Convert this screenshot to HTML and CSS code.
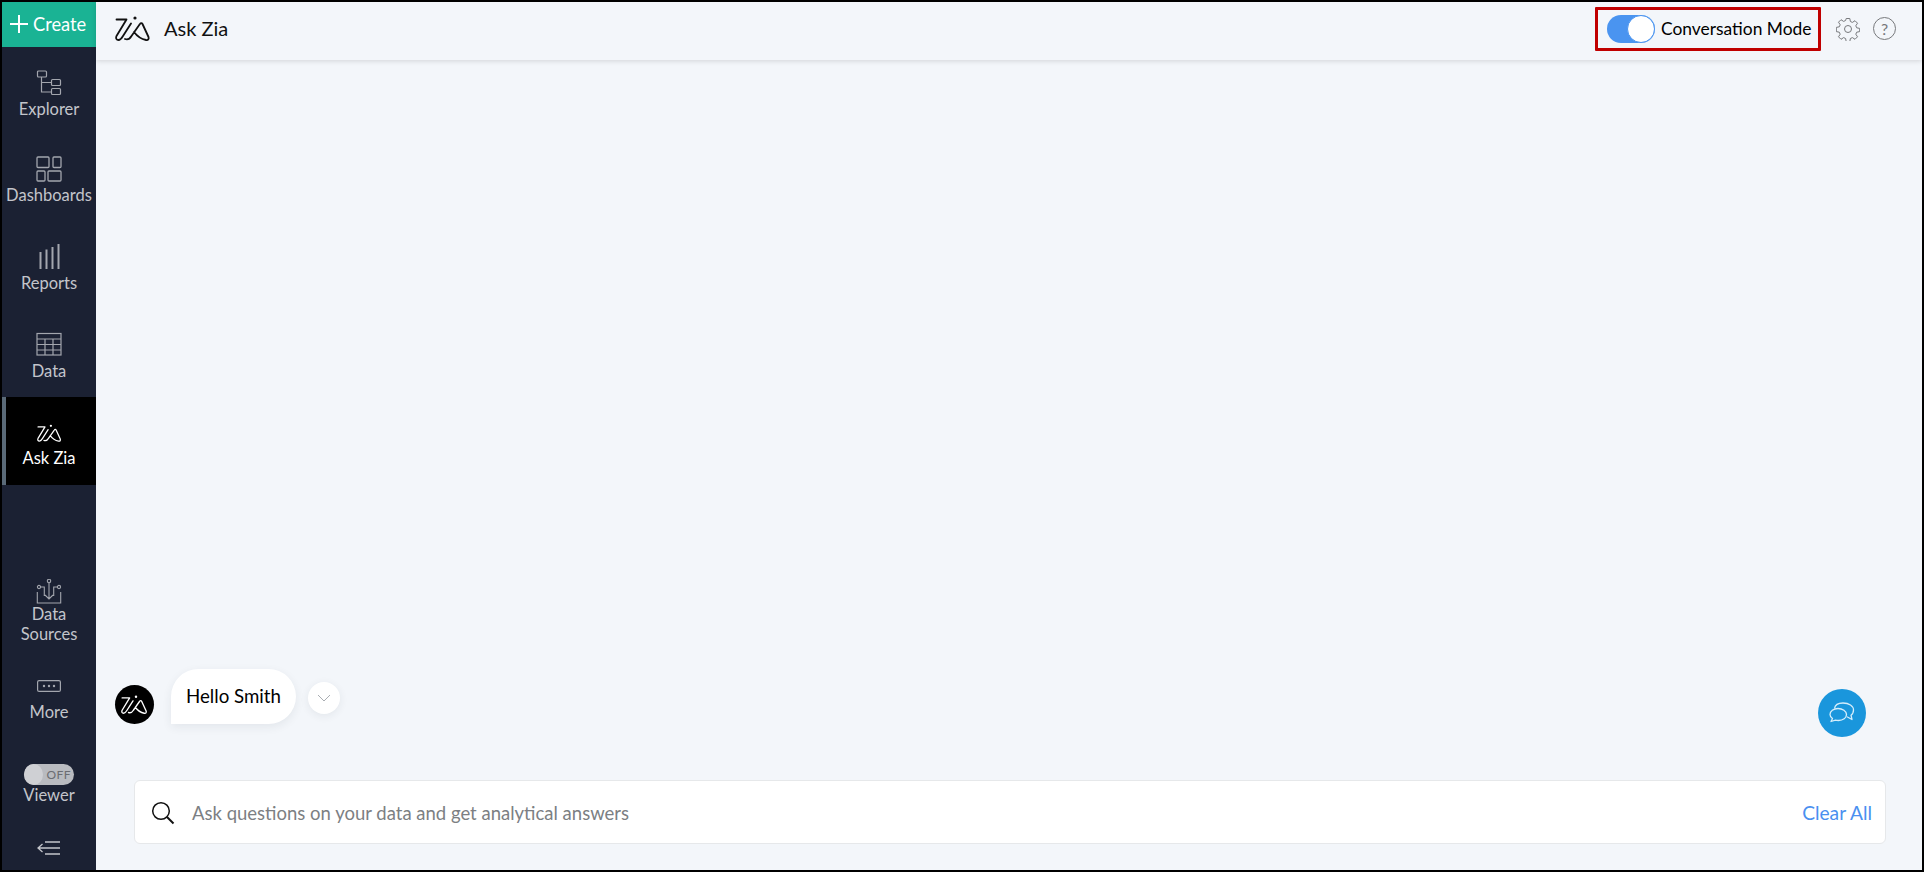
FILE: index.html
```html
<!DOCTYPE html>
<html lang="en">
<head>
<meta charset="utf-8">
<title>Ask Zia</title>
<link rel="stylesheet" href="styles.css">
</head>
<body>
<svg class="defs" width="0" height="0" aria-hidden="true">
  <symbol id="zia" viewBox="0 0 36 26">
    <path d="M1.500 3.500H11.500L1.500 20c-1 2.500 0 4 2 4s3-1.500 4.500-4L16 7.500" fill="none" stroke="currentColor" stroke-width="1.800" stroke-linecap="round" stroke-linejoin="round"/>
    <path d="M19 16c3 4 7 7 12 8 2 .5 3.200-1 2.500-3L27.500 8c-.6-1.200-1.800-1.200-2.600 0L16.500 20c-1.500 2.500-4 4-6.500 3" fill="none" stroke="currentColor" stroke-width="1.800" stroke-linecap="round" stroke-linejoin="round"/>
    <circle cx="20" cy="2" r="1.600" fill="currentColor"/>
  </symbol>
</svg>
<div class="app">
  <aside class="sidebar">
    <div class="create">
      <svg class="plus" width="18" height="18" viewBox="0 0 18 18"><path d="M9 0v18M0 9h18" stroke="#fff" stroke-width="2"/></svg>
      <span>Create</span>
    </div>
    <nav class="nav-main">
      <div class="nav-item">
        <svg class="nav-icon" width="26" height="26" viewBox="0 0 26 26"><g fill="none" stroke="currentColor" stroke-width="1.200"><rect x="1.500" y="1" width="9" height="6" rx="1"/><rect x="15.500" y="9.500" width="9" height="6" rx="1"/><rect x="15.500" y="18.500" width="9" height="6" rx="1"/><path d="M5.500 7v15h10M5.500 12.500h10"/></g></svg>
        <span>Explorer</span>
      </div>
      <div class="nav-item">
        <svg class="nav-icon" width="26" height="26" viewBox="0 0 26 26"><g fill="none" stroke="currentColor" stroke-width="1.300"><rect x="1" y="1" width="12" height="10.500" rx="1"/><rect x="17" y="1" width="8" height="10.500" rx="1"/><rect x="1" y="15" width="8" height="10" rx="1"/><rect x="12" y="15" width="13" height="10" rx="1"/></g></svg>
        <span>Dashboards</span>
      </div>
      <div class="nav-item">
        <svg class="nav-icon" width="26" height="26" viewBox="0 0 26 26"><g stroke="currentColor" stroke-width="2"><path d="M4.500 25V8M10.500 25V5.500M16.500 25V3M22.500 25V0"/></g></svg>
        <span>Reports</span>
      </div>
      <div class="nav-item">
        <svg class="nav-icon" width="26" height="26" viewBox="0 0 26 26"><g fill="none" stroke="currentColor" stroke-width="1.200"><rect x="1" y="1.500" width="24" height="21.500"/><path d="M1 7h24M1 12.500h24M1 18h24M9 7v16M17 7v16"/></g></svg>
        <span>Data</span>
      </div>
      <div class="nav-item active">
        <svg class="nav-icon zia-small" width="25" height="19"><use href="#zia"/></svg>
        <span>Ask Zia</span>
      </div>
    </nav>
    <div class="nav-bottom">
      <div class="nav-item compact sources">
        <svg class="nav-icon" width="26" height="26" viewBox="0 0 26 26"><g fill="none" stroke="currentColor" stroke-width="1.100"><path d="M1.300 13v11H24.700V13M13 4v16M9 16l4 4 4-4M4.600 8H8.300v9M21.400 8H17.700v9"/><circle cx="13" cy="2" r="1.700"/><circle cx="3" cy="8" r="1.600"/><circle cx="23" cy="8" r="1.600"/></g></svg>
        <span>Data<br>Sources</span>
      </div>
      <div class="nav-item compact more">
        <svg class="nav-icon" width="24" height="12" viewBox="0 0 24 12"><rect x=".6" y=".6" width="22.800" height="10.800" rx="1.500" fill="none" stroke="currentColor" stroke-width="1.200"/><circle cx="7" cy="6" r="1.200" fill="currentColor"/><circle cx="12" cy="6" r="1.200" fill="currentColor"/><circle cx="17" cy="6" r="1.200" fill="currentColor"/></svg>
        <span>More</span>
      </div>
      <div class="nav-item compact viewer">
        <div class="viewer-toggle"><i class="viewer-knob"></i><b>OFF</b></div>
        <span>Viewer</span>
      </div>
      <svg class="collapse" width="24" height="14" viewBox="0 0 24 14"><path d="M8 1h15M1 7h22M8 13h15M5.500 3L1 7l4.500 4" fill="none" stroke="currentColor" stroke-width="1.300"/></svg>
    </div>
  </aside>
  <main class="main">
    <header class="topbar">
      <svg class="top-logo" width="36" height="26"><use href="#zia"/></svg>
      <h1 class="title">Ask Zia</h1>
      <div class="mode-box">
        <div class="switch"><i class="switch-knob"></i></div>
        <span>Conversation Mode</span>
      </div>
      <svg class="top-icon gear" width="24" height="24" viewBox="0 0 24 24"><g fill="none" stroke="#77797c" stroke-width="1"><circle cx="12" cy="12" r="3.500"/><path d="M10.200 1.500h3.600l.6 3 2 .9 2.600-1.700 2.500 2.500-1.700 2.600.9 2 3 .6v3.200l-3 .6-.9 2 1.700 2.600-2.500 2.500-2.600-1.700-2 .9-.6 3h-3.600l-.6-3-2-.9-2.600 1.700-2.500-2.500 1.700-2.600-.9-2-3-.6V10.400l3-.6.9-2-1.700-2.600 2.500-2.500 2.600 1.700 2-.9z"/></g></svg>
      <div class="help">?</div>
    </header>
    <section class="chat">
      <div class="chat-row">
        <div class="avatar"><svg width="27" height="20"><use href="#zia"/></svg></div>
        <div class="bubble">Hello Smith</div>
        <div class="chevron"><svg width="14" height="8" viewBox="0 0 14 8"><path d="M1 1l6 6 6-6" fill="none" stroke="#a9adb2" stroke-width="1"/></svg></div>
        <div class="fab"><svg width="26" height="22" viewBox="0 0 26 22"><g fill="none" stroke="#d6eefb" stroke-width="1.300" stroke-linejoin="round"><path d="M5.500 6.500C6 3 9.500 1 14 1c6 0 10.500 2.800 10.500 7 0 2.500-1 4.200-2.500 5.200l1 4.300-5-2.700"/><path d="M2 19.500l1.500-3C2 15.500 1 14 1 12.500 1 9 4.500 6.500 9 6.500s8.500 2.500 8.500 6-3.500 6-8 6c-1 0-2-.1-3-.4z"/></g></svg></div>
      </div>
      <div class="ask">
        <svg class="search" width="24" height="24" viewBox="0 0 24 24"><circle cx="10" cy="10" r="8.300" fill="none" stroke="#111" stroke-width="1.500"/><path d="M16 16l6.500 6.500" stroke="#111" stroke-width="2"/></svg>
        <span class="placeholder">Ask questions on your data and get analytical answers</span>
        <span class="clear">Clear All</span>
      </div>
    </section>
  </main>
</div>
</body>
</html>
```
FILE: styles.css
```css
* { box-sizing: border-box; }
html, body { margin: 0; height: 100%; }
body { font-family: Lato, "Open Sans", sans-serif; overflow: hidden; }
.defs { display: block; height: 0; }
.app {
  display: flex;
  width: 1924px;
  height: 872px;
  border: 2px solid #000;
  background: #f3f6fa;
}
.sidebar {
  width: 94px;
  flex: none;
  display: flex;
  flex-direction: column;
  background: #1b2133;
  color: #c3c5cb;
}
.create {
  height: 45px;
  flex: none;
  display: flex;
  align-items: center;
  gap: 5px;
  padding: 0 0 2px 8px;
  background: #1ab394;
  color: #fff;
  font-size: 18.300px;
}
.plus { flex: none; }
.nav-item {
  height: 88px;
  display: flex;
  flex-direction: column;
  align-items: center;
  font-size: 16.500px;
  line-height: 20px;
  text-align: center;
  padding-top: 23px;
}
.nav-main .nav-item:first-child { height: 86px; }
.nav-icon { display: block; margin-bottom: 3px; color: #a3a6ae; flex: none; }
.nav-item.active {
  background: #000;
  color: #fff;
  border-left: 4px solid #5a6a78;
  padding-right: 4px;
  padding-top: 27px;
}
.zia-small { color: #fff; margin-bottom: 5px; }
.nav-bottom { margin-top: auto; padding-bottom: 15px; display: flex; flex-direction: column; align-items: center; }
.nav-item.compact { height: auto; padding-top: 0; }
.sources { margin-bottom: 36px; }
.sources .nav-icon { margin-bottom: -1px; }
.more { margin-bottom: 42px; }
.more .nav-icon { margin-bottom: 10px; }
.viewer { margin-bottom: 36px; }
.viewer-toggle {
  width: 50px;
  height: 21px;
  border-radius: 11px;
  background: #b9bbc0;
  display: flex;
  align-items: center;
  justify-content: space-between;
  padding: 0 3px 0 0;
}
.viewer-knob { width: 19px; height: 21px; border-radius: 50%; background: #cfd0d4; }
.viewer-toggle b { font-size: 12px; font-weight: 400; color: #6b6d72; letter-spacing: .4px; }
.collapse { color: #c3c5cb; display: block; }
.main { flex: 1; min-width: 0; display: flex; flex-direction: column; }
.topbar {
  height: 58px;
  flex: none;
  display: flex;
  align-items: center;
  padding: 0 26px 5px 19px;
  background: #f3f6fa;
  box-shadow: 0 1px 5px rgba(0,0,0,.14);
}
.top-logo { color: #111; margin-right: 13px; }
.title { margin: 0 0 2px; font-size: 20px; font-weight: 400; color: #111; }
.mode-box {
  margin-left: auto;
  width: 226px;
  height: 44px;
  display: flex;
  align-items: center;
  gap: 6px;
  padding-left: 9px;
  border: 3px solid #c00000;
  border-radius: 1px;
  font-size: 17.400px;
  color: #000;
  white-space: nowrap;
}
.switch {
  width: 48px;
  height: 28px;
  flex: none;
  border-radius: 14px;
  background: #4a94f0;
  display: flex;
  justify-content: flex-end;
}
.switch-knob { width: 28px; height: 28px; border-radius: 50%; background: #fff; border: 1px solid #4a94f0; }
.gear { margin-left: 15px; }
.help {
  width: 23px;
  height: 23px;
  margin-left: 13px;
  border: 1px solid #77797c;
  border-radius: 50%;
  color: #77797c;
  font-size: 16px;
  line-height: 21px;
  text-align: center;
}
.chat {
  flex: 1;
  display: flex;
  flex-direction: column;
  justify-content: flex-end;
  padding-bottom: 26px;
}
.chat-row { display: flex; align-items: flex-start; padding: 0 56px 0 19px; margin-bottom: 43px; height: 68px; }
.avatar {
  width: 39px;
  height: 39px;
  margin-top: 16px;
  border-radius: 50%;
  background: #000;
  color: #fff;
  display: flex;
  align-items: center;
  justify-content: center;
}
.bubble {
  width: 125px;
  height: 55px;
  margin-left: 17px;
  border-radius: 28px 28px 28px 0;
  background: #fff;
  font-size: 18.700px;
  line-height: 55px;
  text-align: center;
  color: #000;
  box-shadow: 0 3px 10px rgba(40,50,70,.08);
}
.chevron {
  width: 32px;
  height: 32px;
  margin: 13px 0 0 12px;
  border-radius: 50%;
  background: #fff;
  display: flex;
  align-items: center;
  justify-content: center;
  box-shadow: 0 2px 8px rgba(40,50,70,.08);
}
.fab {
  width: 48px;
  height: 48px;
  margin: 20px 0 0 auto;
  border-radius: 50%;
  background: #1a96dc;
  display: flex;
  align-items: center;
  justify-content: center;
}
.ask {
  height: 64px;
  margin: 0 36px 0 38px;
  display: flex;
  align-items: center;
  padding: 1px 13px 0 16px;
  background: #fff;
  border: 1px solid #e6e8ea;
  border-radius: 6px;
}
.search { flex: none; margin-right: 17px; }
.placeholder { font-size: 18.500px; color: #7c7f83; }
.clear { margin-left: auto; font-size: 19.200px; color: #4a90f0; }
```
